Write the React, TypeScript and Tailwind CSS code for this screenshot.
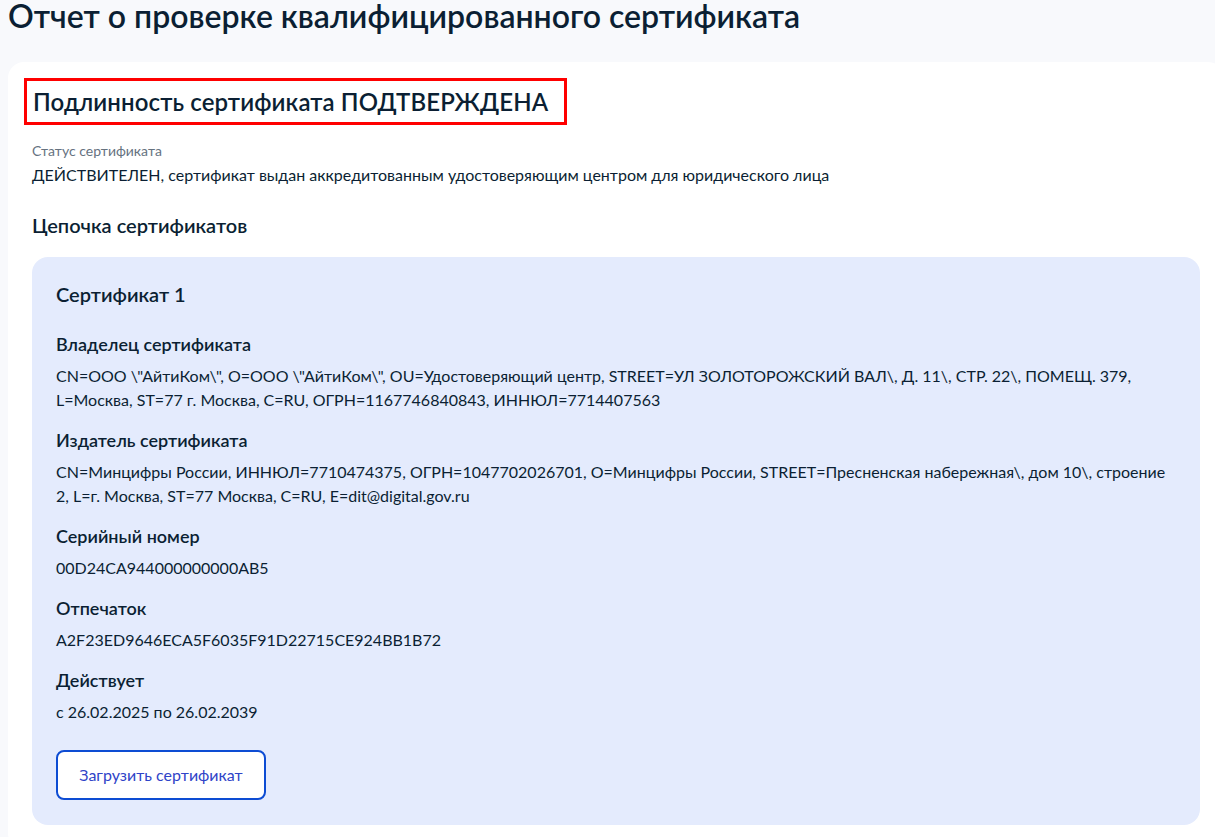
import React from 'react';

interface Field {
  label: string;
  value: string[];
}

const fields: Field[] = [
  {
    label: 'Владелец сертификата',
    value: [
      'CN=ООО \\"АйтиКом\\", O=ООО \\"АйтиКом\\", OU=Удостоверяющий центр, STREET=УЛ ЗОЛОТОРОЖСКИЙ ВАЛ\\, Д. 11\\, СТР. 22\\, ПОМЕЩ. 379,',
      'L=Москва, ST=77 г. Москва, C=RU, ОГРН=1167746840843, ИННЮЛ=7714407563',
    ],
  },
  {
    label: 'Издатель сертификата',
    value: [
      'CN=Минцифры России, ИННЮЛ=7710474375, ОГРН=1047702026701, O=Минцифры России, STREET=Пресненская набережная\\, дом 10\\, строение',
      '2, L=г. Москва, ST=77 Москва, C=RU, E=dit@digital.gov.ru',
    ],
  },
  { label: 'Серийный номер', value: ['00D24CA944000000000AB5'] },
  { label: 'Отпечаток', value: ['A2F23ED9646ECA5F6035F91D22715CE924BB1B72'] },
  { label: 'Действует', value: ['с 26.02.2025 по 26.02.2039'] },
];

export default function App() {
  return (
    <div className="min-h-[837px] bg-[#f8f9fc] pl-2 overflow-hidden text-[#0b1f33] font-['Lato','Noto_Sans',sans-serif]">
      <h1 className="text-[32px] leading-8 font-semibold whitespace-nowrap">Отчет о проверке квалифицированного сертификата</h1>

      <div className="mt-[30px] w-[1216px] bg-white rounded-2xl pt-4 px-4 pb-6">
        <div className="inline-block border-[3px] border-[#ff0000] pl-[6px] pr-[16px] pt-[7px] pb-[6px]">
          <h2 className="text-[24px] leading-7 font-semibold tracking-[0.1px]">Подлинность сертификата ПОДТВЕРЖДЕНА</h2>
        </div>

        <div className="px-2">
          <div className="mt-4 text-[14px] leading-5 text-[#66727f]">Статус сертификата</div>
          <div className="mt-[2px] text-[16px] leading-6">
            ДЕЙСТВИТЕЛЕН, сертификат выдан аккредитованным удостоверяющим центром для юридического лица
          </div>

          <h3 className="mt-6 text-[20px] leading-7 font-semibold">Цепочка сертификатов</h3>

          <div className="mt-[18px] bg-[#e4ebfd] rounded-2xl px-6 pt-[23px] pb-[25px]">
            <h4 className="text-[20px] leading-7 font-semibold">Сертификат 1</h4>
            <div className="mt-6 flex flex-col gap-4">
              {fields.map((f) => (
                <div key={f.label}>
                  <div className="text-[18px] leading-6 font-semibold">{f.label}</div>
                  <div className="mt-2 text-[16px] leading-6">
                    {f.value.map((line, i) => (
                      <div key={i}>{line}</div>
                    ))}
                  </div>
                </div>
              ))}
            </div>
            <button className="mt-[26px] w-[210px] h-[50px] bg-white border-2 border-[#0d4cd3] rounded-lg text-[16px] text-[#2f44c8]">
              Загрузить сертификат
            </button>
          </div>
        </div>
      </div>
    </div>
  );
}
